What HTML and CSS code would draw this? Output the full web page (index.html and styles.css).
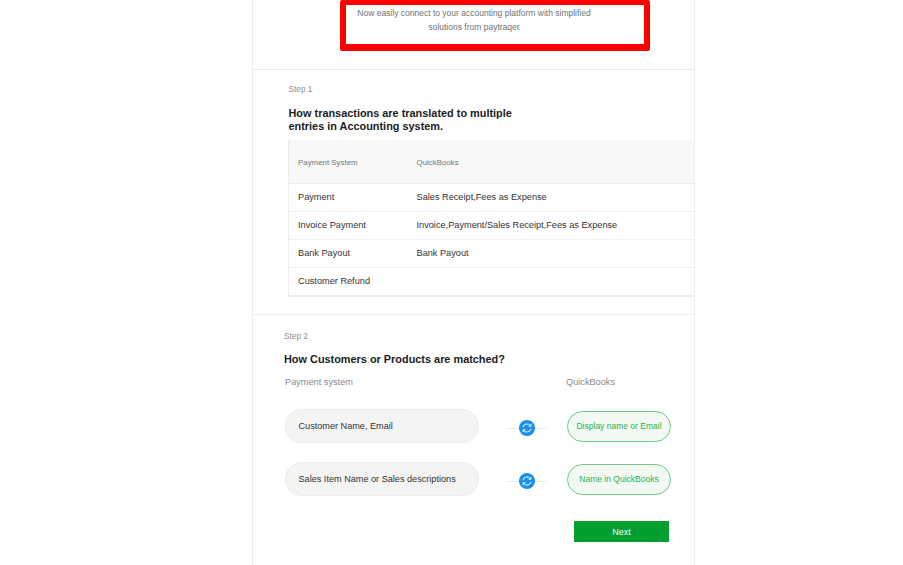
FILE: index.html
```html
<!DOCTYPE html>
<html lang="en">
<head>
<meta charset="utf-8">
<title>Accounting setup</title>
<link rel="stylesheet" href="styles.css">
</head>
<body>
<main class="panel">
  <section class="hero">
    <div class="notice">
      <p>Now easily connect to your accounting platform with simplified<br>solutions from paytraqer</p>
    </div>
  </section>
  <section class="step-one">
    <div class="step-label">Step 1</div>
    <h2 class="title">How transactions are translated to multiple<br>entries in Accounting system.</h2>
    <div class="table">
      <div class="row head"><span class="c1">Payment System</span><span>QuickBooks</span></div>
      <div class="row"><span class="c1">Payment</span><span>Sales Receipt,Fees as Expense</span></div>
      <div class="row"><span class="c1">Invoice Payment</span><span>Invoice,Payment/Sales Receipt,Fees as Expense</span></div>
      <div class="row"><span class="c1">Bank Payout</span><span>Bank Payout</span></div>
      <div class="row"><span class="c1">Customer Refund</span><span></span></div>
    </div>
  </section>
  <section class="step-two">
    <div class="step-label">Step 2</div>
    <h2 class="title">How Customers or Products are matched?</h2>
    <div class="match-head"><span>Payment system</span><span>QuickBooks</span></div>
    <div class="match">
      <div class="source">Customer Name, Email</div>
      <div class="link"><svg class="sync" viewBox="0 0 16 16" width="16" height="16"><circle cx="8" cy="8" r="8" fill="#1890ef"/><path d="M4 7.2A4.1 4.1 0 0 1 11.3 5.6M12 8.8A4.1 4.1 0 0 1 4.7 10.4" fill="none" stroke="#fff" stroke-width="1"/><path d="M11.9 3.9V6.2H9.6M4.1 12.1V9.8H6.4" fill="none" stroke="#fff" stroke-width="1"/></svg></div>
      <div class="target">Display name or Email</div>
    </div>
    <div class="match">
      <div class="source">Sales Item Name or Sales descriptions</div>
      <div class="link"><svg class="sync" viewBox="0 0 16 16" width="16" height="16"><circle cx="8" cy="8" r="8" fill="#1890ef"/><path d="M4 7.2A4.1 4.1 0 0 1 11.3 5.6M12 8.8A4.1 4.1 0 0 1 4.7 10.4" fill="none" stroke="#fff" stroke-width="1"/><path d="M11.9 3.9V6.2H9.6M4.1 12.1V9.8H6.4" fill="none" stroke="#fff" stroke-width="1"/></svg></div>
      <div class="target">Name in QuickBooks</div>
    </div>
    <div class="actions"><button class="next">Next</button></div>
  </section>
</main>
</body>
</html>
```
FILE: styles.css
```css
html, body { margin: 0; padding: 0; background: #fff; height: 100%; overflow: hidden; }
body { font-family: "Liberation Sans", Arial, sans-serif; color: #333; }
.panel { width: 443px; height: 565px; margin-left: 252px; box-sizing: border-box; border-left: 1px solid #eeeeee; border-right: 1px solid #eeeeee; }
.hero { height: 69px; border-bottom: 1px solid #e9e9e9; display: flex; box-sizing: content-box; }
.notice { width: 309.5px; height: 50.5px; margin-left: 87px; box-sizing: border-box; border: 6px solid #fe0000; border-top-width: 5px; border-bottom-width: 7px; border-radius: 2px; padding-top: 1px; }
.notice p { margin: 0; width: 256px; text-align: center; font-size: 8.5px; line-height: 14px; color: #6d7278; }
.step-one { height: 245px; border-bottom: 1px solid #eeeeee; padding: 13px 0 0 35.5px; box-sizing: border-box; }
.step-label { font-size: 8.3px; line-height: 12px; color: #8f8f8f; }
.title { margin: 12px 0 0; font-size: 10.9px; line-height: 13px; font-weight: 700; color: #1c1c1c; }
.table { margin: 7px 0 0 -0.5px; width: 406px; border: 1px solid #ececec; border-right: 0; box-sizing: border-box; border-top: 0; border-bottom: 2px solid #ececec; }
.row { display: flex; align-items: center; height: 28px; padding: 0 0 1px 9px; border-bottom: 1px solid #f0f0f0; box-sizing: border-box; font-size: 9.2px; color: #333; }
.row:last-child { border-bottom: 0; height: 27px; padding-bottom: 2px; }
.row.head { height: 44px; padding: 1px 0 0 9px; background: #f8f8f7; font-size: 7.9px; color: #777; border-bottom: 1px solid #ececec; }
.c1 { width: 118.5px; flex: none; }
.step-two { padding: 15px 0 0 31px; box-sizing: border-box; }
.step-two .title { margin-top: 11px; }
.match-head { display: flex; margin: 10px 0 0 1px; font-size: 9.2px; line-height: 12px; color: #8a8a8a; }
.match-head span:first-child { width: 281px; }
.match { display: flex; align-items: center; margin-top: 19px; margin-left: 1px; }
.match-head + .match { margin-top: 21px; }
.source { width: 194px; height: 34px; box-sizing: border-box; padding-left: 12.5px; display: flex; align-items: center; border: 1px solid #ececea; border-radius: 17px; background: #f4f5f3; font-size: 9.15px; color: #333; }
.link { width: 40px; height: 1px; margin: 4px 0 0 28px; background: #e9e9e9; display: flex; justify-content: center; align-items: center; }
.sync { flex: none; }
.target { width: 104px; height: 31px; margin-left: 20px; padding-bottom: 1px; box-sizing: border-box; display: flex; align-items: center; justify-content: center; border: 1px solid #72c987; border-radius: 16px; background: #f1f9f2; font-size: 8.5px; color: #2cb34f; }
.actions { display: flex; margin: 25px 0 0 290px; }
.next { width: 95px; height: 21px; border: 0; padding: 0; background: #009f2e; color: #fff; font: 9px "Liberation Sans", Arial, sans-serif; }
```
